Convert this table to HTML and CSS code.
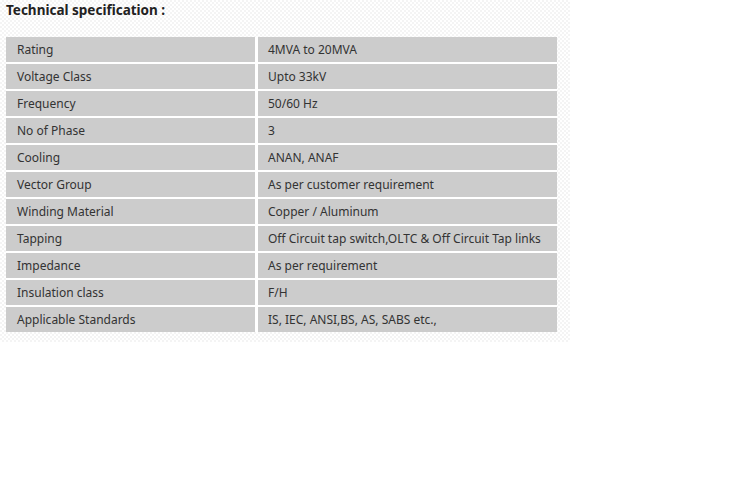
FILE: index.html
```html
<!DOCTYPE html>
<html>
<head>
<meta charset="utf-8">
<link rel="stylesheet" href="styles.css">
</head>
<body>
<div class="spec">
  <h3 class="spec-title">Technical specification :</h3>
  <table class="spec-table">
    <tr><td>Rating</td><td>4MVA to 20MVA</td></tr>
    <tr><td>Voltage Class</td><td>Upto 33kV</td></tr>
    <tr><td>Frequency</td><td>50/60 Hz</td></tr>
    <tr><td>No of Phase</td><td>3</td></tr>
    <tr><td>Cooling</td><td>ANAN, ANAF</td></tr>
    <tr><td>Vector Group</td><td>As per customer requirement</td></tr>
    <tr><td>Winding Material</td><td>Copper / Aluminum</td></tr>
    <tr><td>Tapping</td><td>Off Circuit tap switch,OLTC &amp; Off Circuit Tap links</td></tr>
    <tr><td>Impedance</td><td>As per requirement</td></tr>
    <tr><td>Insulation class</td><td>F/H</td></tr>
    <tr><td>Applicable Standards</td><td>IS, IEC, ANSI,BS, AS, SABS etc.,</td></tr>
  </table>
</div>
</body>
</html>
```

FILE: styles.css
```css
html, body {
  margin: 0;
  padding: 0;
  background: #ffffff;
}
.spec {
  width: 570px;
  height: 342px;
  box-sizing: border-box;
  padding: 0 0 0 6px;
  background-color: #ffffff;
  background-image:
    repeating-conic-gradient(#f4f4f4 0 25%, #ffffff 0 50%);
  background-size: 4px 4px;
  font-family: "Noto Sans", "Open Sans", sans-serif;
}
.spec-title {
  margin: 0;
  padding-top: 1px;
  height: 36px;
  font-size: 13.5px;
  font-weight: bold;
  color: #222222;
  line-height: 19px;
}
.spec-table {
  border-collapse: separate;
  border-spacing: 0;
  width: 551px;
  font-size: 12px;
  color: #333333;
}
.spec-table td {
  background: #cccccc;
  height: 27px;
  padding: 0 0 0 10px;
  border-bottom: 2px solid #ffffff;
  box-sizing: border-box;
  line-height: 16px;
}
.spec-table tr:last-child td {
  border-bottom: none;
  height: 25px;
}
.spec-table td:first-child {
  width: 252px;
  padding-left: 11px;
  border-right: 3px solid #ffffff;
}
```
